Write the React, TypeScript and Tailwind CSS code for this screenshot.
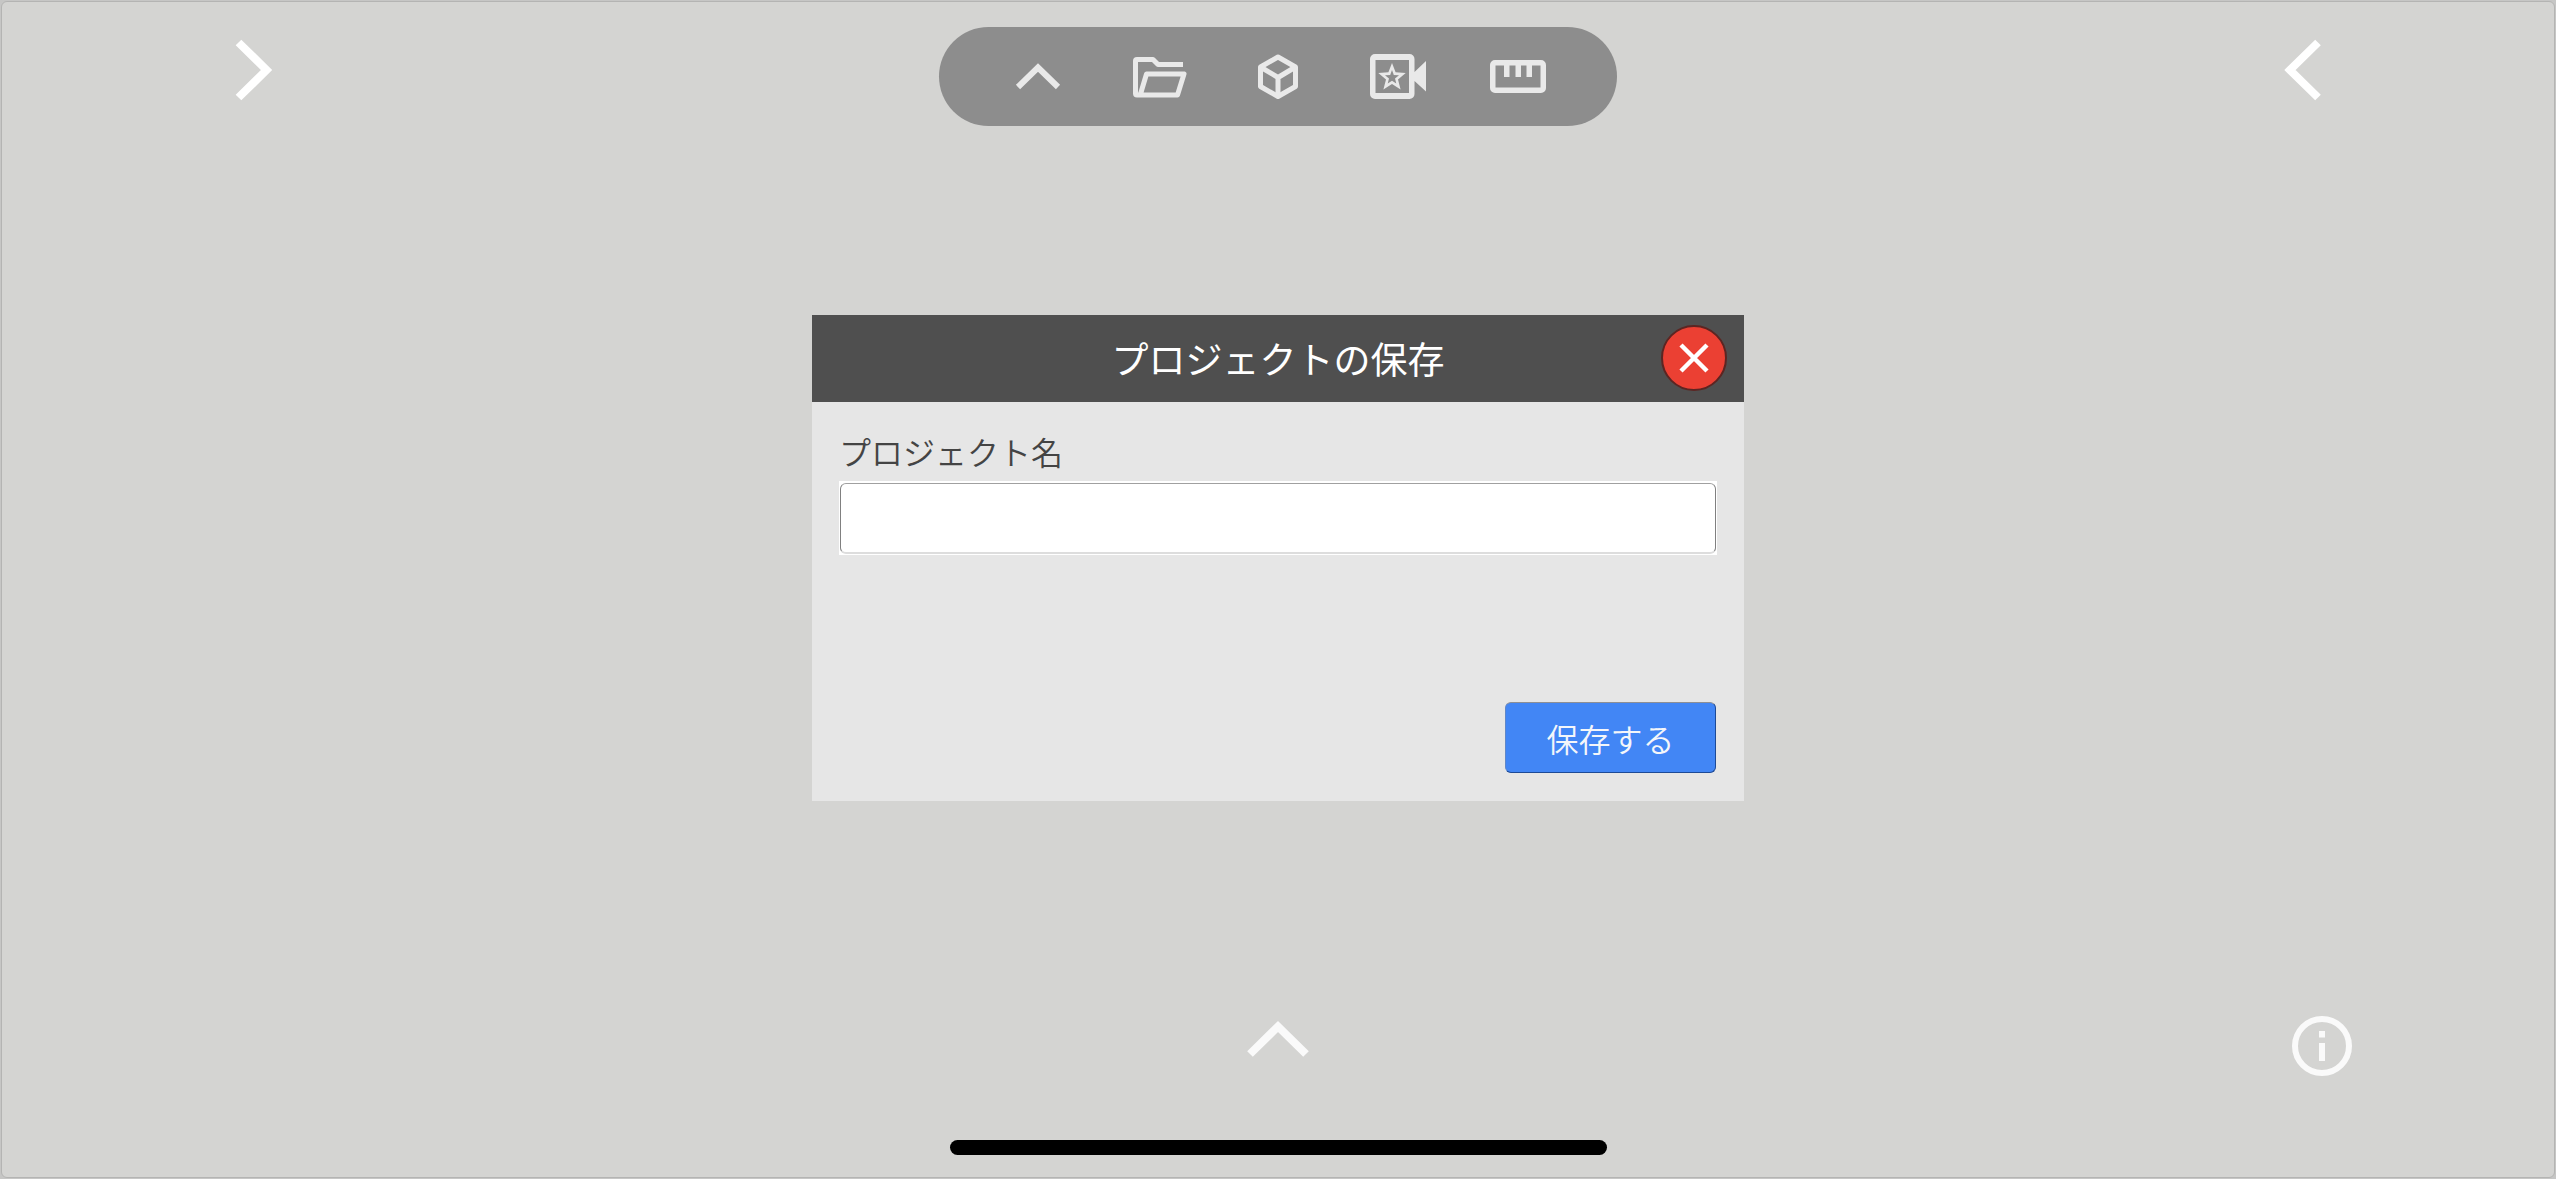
import React from 'react';

const toolbarItems = [
  {
    label: 'ツールバーを閉じる',
    icon: (
      <svg width="60" height="60" viewBox="0 0 60 60" fill="none" stroke="currentColor" strokeWidth="6" aria-hidden="true">
        <path d="M10 40 30 20.500 50 40" />
      </svg>
    ),
  },
  {
    label: 'プロジェクト',
    icon: (
      <svg width="60" height="60" viewBox="0 0 60 60" fill="none" stroke="currentColor" strokeWidth="5" strokeLinejoin="round" aria-hidden="true">
        <path d="M55 17.500H30L25 12.500H9A1.500 1.500 0 0 0 7.500 14V46.500A1.500 1.500 0 0 0 9 48H49.500L56 27H18.500L12.500 47" />
      </svg>
    ),
  },
  {
    label: 'モデル',
    icon: (
      <svg width="60" height="60" viewBox="0 0 60 60" fill="none" stroke="currentColor" strokeWidth="5" strokeLinejoin="round" aria-hidden="true">
        <path d="M30 10 47.500 20V39.500L30 49.500 12.500 39.500V20Z" />
        <path d="M12.500 20 30 30.500 47.500 20M30 30.500V49" />
      </svg>
    ),
  },
  {
    label: 'カメラ',
    icon: (
      <svg width="60" height="60" viewBox="0 0 60 60" fill="currentColor" aria-hidden="true">
        <path fillRule="evenodd" d="M7 7H41.500A5 5 0 0 1 46.500 12V25L58 14V44.500L46.500 34V47A5 5 0 0 1 41.500 52H7A5 5 0 0 1 2 47V12A5 5 0 0 1 7 7ZM7.500 13V46H41V13Z" />
        <path fillRule="evenodd" d="M24 16 27.600 25.200 37.700 26 30 32.400 32.600 42.500 24 37 15.400 42.500 18 32.400 10.300 26 20.400 25.200ZM24 23 22.200 27.900 17 28.200 21 31.500 19.700 36.500 24 33.700 28.300 36.500 27 31.500 31 28.200 25.800 27.900Z" />
      </svg>
    ),
  },
  {
    label: '計測',
    icon: (
      <svg width="60" height="60" viewBox="0 0 60 60" fill="currentColor" aria-hidden="true">
        <path fillRule="evenodd" d="M7 13H53A5 5 0 0 1 58 18V41A5 5 0 0 1 53 46H7A5 5 0 0 1 2 41V18A5 5 0 0 1 7 13ZM7.500 18.500V40.500H52.500V18.500H44V30H38.500V18.500H33V30H27.500V18.500H21.500V30H16V18.500Z" />
      </svg>
    ),
  },
];

function SaveDialog() {
  return (
    <section
      role="dialog"
      aria-labelledby="dialog-title"
      className="flex w-full max-w-[932px] flex-col bg-[#e6e6e6]"
    >
      <header className="grid grid-cols-[1fr_auto_1fr] items-start bg-[#4f4f4f] px-[17px] py-[10px] text-white">
        <h1 id="dialog-title" className="col-start-2 text-[37px] leading-[67px]">
          プロジェクトの保存
        </h1>
        <button
          type="button"
          aria-label="閉じる"
          className="flex size-[66px] items-center justify-center justify-self-end rounded-full border-2 border-[#5c2522] bg-[#eb4033]"
        >
          <svg width="34" height="34" viewBox="0 0 34 34" fill="none" stroke="currentColor" strokeWidth="4.500" aria-hidden="true">
            <path d="M4 4 30 30M30 4 4 30" />
          </svg>
        </button>
      </header>
      <form className="flex flex-col px-[27px] pt-6 pb-7" onSubmit={(e) => e.preventDefault()}>
        <label htmlFor="project-name" className="text-[32px] leading-[50px] font-[350] text-[#444444]">
          プロジェクト名
        </label>
        <div className="mt-[5px] bg-white px-px pt-[2px] pb-px">
          <input
            id="project-name"
            type="text"
            className="block h-[71px] w-full rounded-md border border-b-2 border-t-[#a0a0a0] border-r-[#808080] border-b-[#dddddd] border-l-[#808080] bg-white px-4 text-[32px] font-[350] text-[#444444] outline-none"
          />
        </div>
        <button
          type="submit"
          className="mt-[147px] mr-px h-[71px] w-[211px] self-end rounded-md border border-t-[#8c8f96] border-r-[#1d4a96] border-b-[#1d4a96] border-l-[#5f87c8] bg-[#4286f5] text-[32px] font-[350] text-[#f4f6fa]"
        >
          保存する
        </button>
      </form>
    </section>
  );
}

export default function App() {
  return (
    <div className="flex min-h-screen flex-col bg-[#c6c6c5] p-px font-['Noto_Sans_CJK_JP',sans-serif]">
      <div className="flex flex-1 flex-col rounded-md border border-[#b4b4b3] bg-[#d4d4d2]">
        <header className="grid grid-cols-[1fr_auto_1fr] items-start px-[233px] pt-[25px]">
          <button type="button" aria-label="左パネルを開く" className="mt-3 text-white">
            <svg width="38" height="62" viewBox="0 0 38 62" fill="none" stroke="currentColor" strokeWidth="8" aria-hidden="true">
              <path d="M3.500 3.500 31.500 31 3.500 58.500" />
            </svg>
          </button>
          <nav aria-label="ツールバー" className="flex rounded-full bg-[#8d8d8d] px-[39px] text-[#e9e9e9]">
            {toolbarItems.map((item) => (
              <button
                key={item.label}
                type="button"
                aria-label={item.label}
                className="flex h-[99px] w-[120px] items-center justify-center"
              >
                {item.icon}
              </button>
            ))}
          </nav>
          <button type="button" aria-label="右パネルを開く" className="mt-3 justify-self-end text-white">
            <svg width="38" height="62" viewBox="0 0 38 62" fill="none" stroke="currentColor" strokeWidth="8" aria-hidden="true">
              <path d="M35 3.500 7 31 35 58.500" />
            </svg>
          </button>
        </header>

        <main className="flex flex-1 items-center justify-center pb-[26px]">
          <SaveDialog />
        </main>

        <footer className="flex flex-col items-center pb-[22px]">
          <div className="grid w-full grid-cols-[1fr_auto_1fr] items-start px-[202px] text-[#fafafa]">
            <button type="button" aria-label="下パネルを開く" className="col-start-2">
              <svg width="64" height="44" viewBox="0 0 64 44" fill="none" stroke="currentColor" strokeWidth="8" aria-hidden="true">
                <path d="M4 38 32 10.500 60 38" />
              </svg>
            </button>
            <button type="button" aria-label="情報" className="justify-self-end">
              <svg width="60" height="60" viewBox="0 0 60 60" fill="none" stroke="currentColor" strokeWidth="6" aria-hidden="true">
                <circle cx="30" cy="30" r="27" />
                <path d="M30 15V21.500M30 27V45" />
              </svg>
            </button>
          </div>
          <div className="mt-16 h-[15px] w-[657px] max-w-full rounded-full bg-black" />
        </footer>
      </div>
    </div>
  );
}
